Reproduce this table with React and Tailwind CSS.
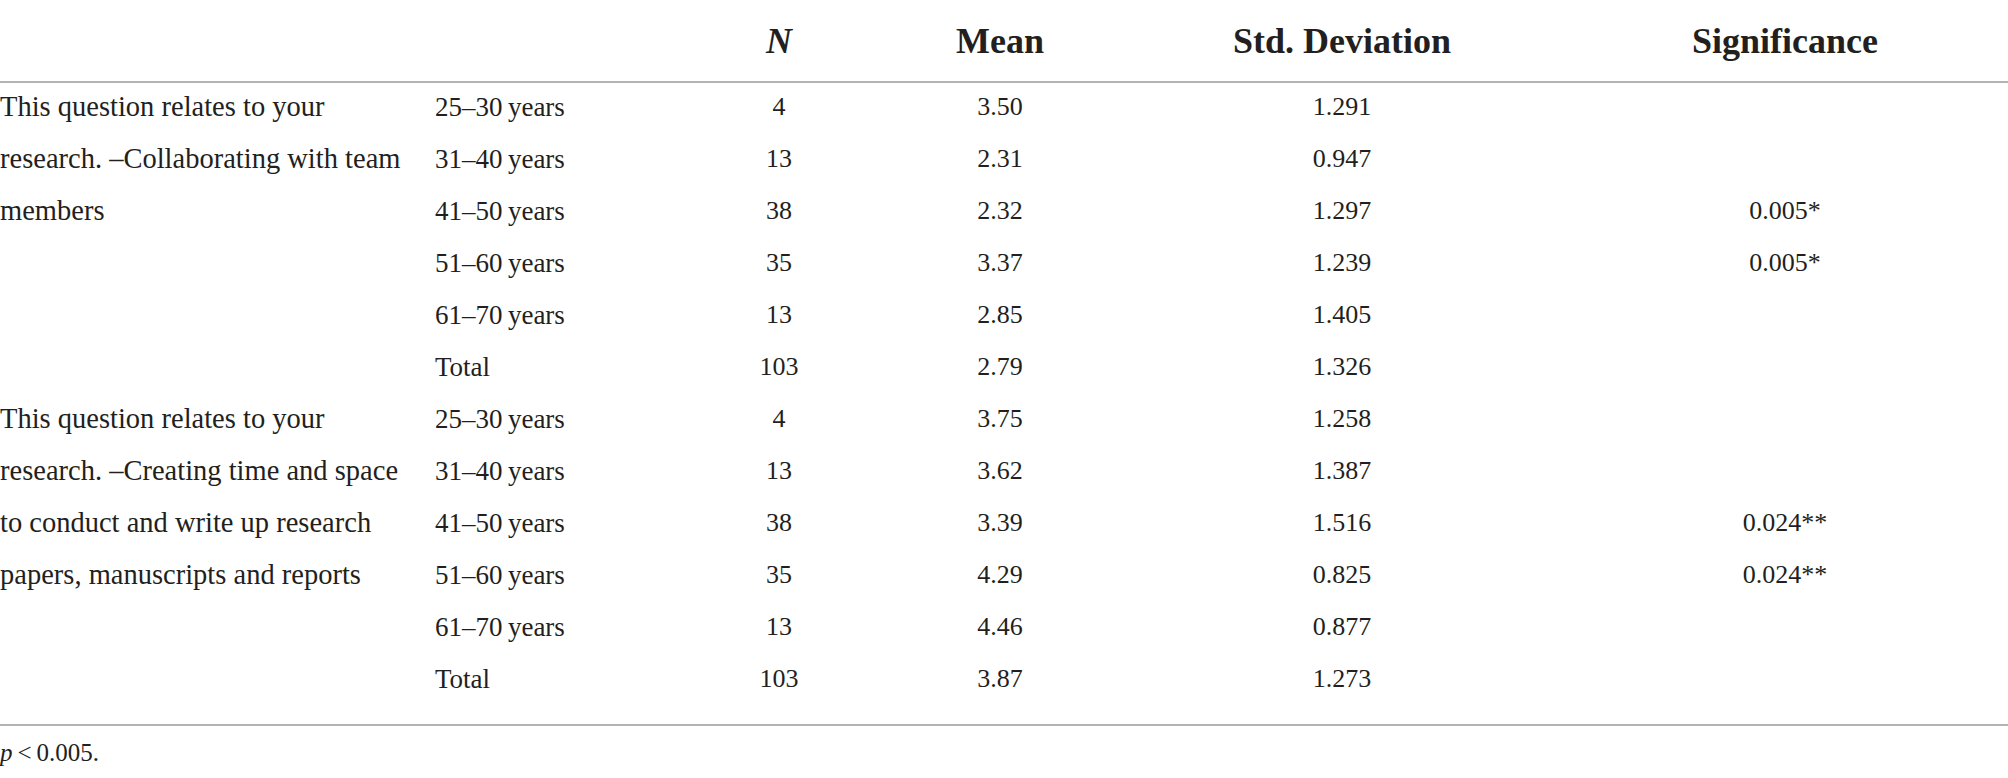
const groups = [
  {
    question: ['This question relates to your', 'research. –Collaborating with team', 'members'],
    rows: [
      ['25–30\u2009years', '4', '3.50', '1.291', ''],
      ['31–40\u2009years', '13', '2.31', '0.947', ''],
      ['41–50\u2009years', '38', '2.32', '1.297', '0.005*'],
      ['51–60\u2009years', '35', '3.37', '1.239', '0.005*'],
      ['61–70\u2009years', '13', '2.85', '1.405', ''],
      ['Total', '103', '2.79', '1.326', ''],
    ],
  },
  {
    question: [
      'This question relates to your',
      'research. –Creating time and space',
      'to conduct and write up research',
      'papers, manuscripts and reports',
    ],
    rows: [
      ['25–30\u2009years', '4', '3.75', '1.258', ''],
      ['31–40\u2009years', '13', '3.62', '1.387', ''],
      ['41–50\u2009years', '38', '3.39', '1.516', '0.024**'],
      ['51–60\u2009years', '35', '4.29', '0.825', '0.024**'],
      ['61–70\u2009years', '13', '4.46', '0.877', ''],
      ['Total', '103', '3.87', '1.273', ''],
    ],
  },
]

const cols = 'grid grid-cols-[435px_255px_178px_264px_420px_1fr]'

export default function App() {
  return (
    <div className="w-[2008px] min-h-[778px] bg-white font-['Liberation_Serif',serif] text-[#231f20]">
      {/* header */}
      <div className={`${cols} h-[83px] border-b-2 border-[#b3b3b3] text-[36px] font-bold leading-[40px]`}>
        <div />
        <div />
        <div className="pt-[21px] text-center italic">N</div>
        <div className="pt-[21px] text-center">Mean</div>
        <div className="pt-[21px] text-center">Std. Deviation</div>
        <div className="pl-[10px] pt-[21px] text-center">Significance</div>
      </div>

      {/* body */}
      <div className={`${cols} auto-rows-[52px] border-b-2 border-[#b3b3b3] pb-[17px] text-[26px] leading-[48px]`}>
        {groups.map((group, gi) => [
          <div key={`q${gi}`} className="row-span-6 whitespace-nowrap text-[28.5px]">
            {group.question.map((line) => (
              <div key={line} className="h-[52px]">{line}</div>
            ))}
          </div>,
          ...group.rows.map((row, ri) => [
            <div key={`${gi}-${ri}-a`} className="whitespace-nowrap text-[27px]">{row[0]}</div>,
            <div key={`${gi}-${ri}-n`} className="text-center">{row[1]}</div>,
            <div key={`${gi}-${ri}-m`} className="text-center">{row[2]}</div>,
            <div key={`${gi}-${ri}-s`} className="text-center">{row[3]}</div>,
            <div key={`${gi}-${ri}-g`} className="pl-[10px] text-center">{row[4]}</div>,
          ]),
        ])}
      </div>

      {/* footnote */}
      <div className="pt-[11px] text-[25px] leading-[32px]">
        <span className="italic">p</span>
        {'\u2009<\u20090.005.'}
      </div>
    </div>
  )
}
